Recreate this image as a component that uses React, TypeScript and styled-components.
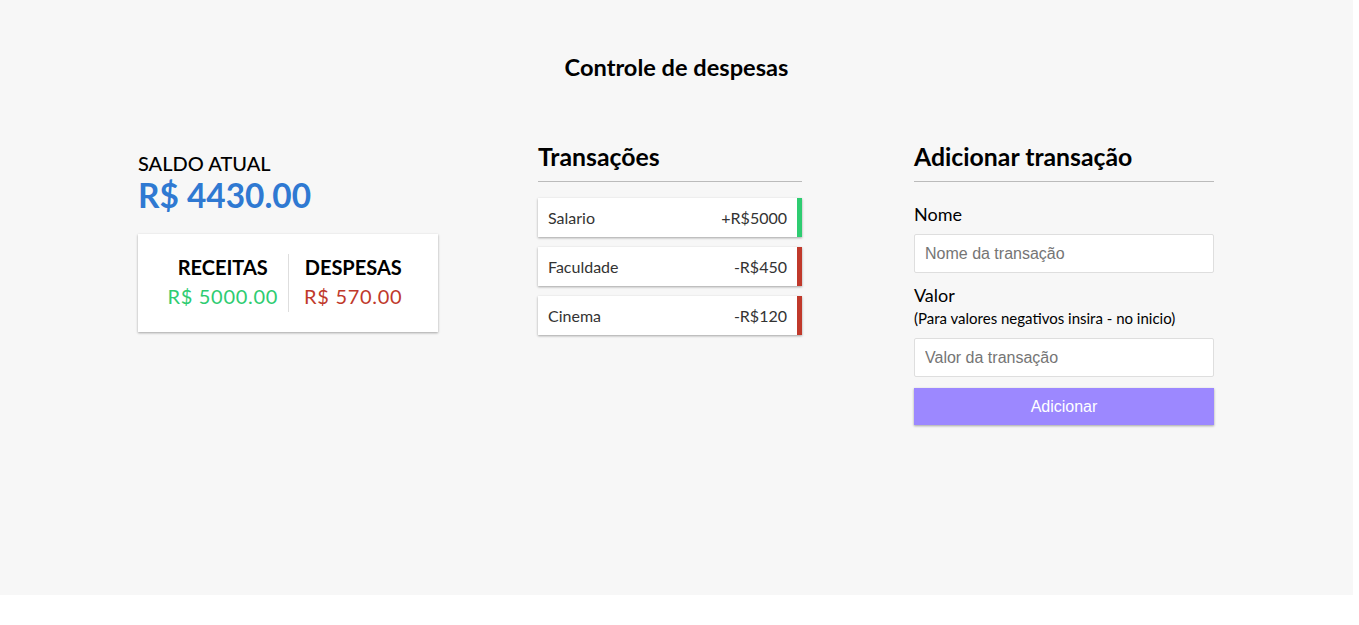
import React from "react";
import styled, { createGlobalStyle } from "styled-components";

const Global = createGlobalStyle`
  html, body { margin: 0; padding: 0; background: #ffffff; }
  * { box-sizing: border-box; }
`;

const Page = styled.div`
  width: 1353px;
  height: 595px;
  background: #f7f7f7;
  font-family: "Lato", "Open Sans", sans-serif;
  color: #000;
  padding-top: 51px;
`;

const Title = styled.h1`
  margin: 0;
  text-align: center;
  font-size: 23.6px;
  font-weight: 700;
  line-height: 32px;
`;

const Columns = styled.div`
  width: 1076px;
  margin: 57px 0 0 138px;
  display: flex;
  align-items: flex-start;
`;

const Column = styled.section<{ $w: number; $ml?: number }>`
  width: ${(p) => p.$w}px;
  margin-left: ${(p) => p.$ml ?? 0}px;
  display: flex;
  flex-direction: column;
`;

const SaldoLabel = styled.h4`
  margin: 11px 0 0;
  font-size: 20px;
  font-weight: 500;
  line-height: 24px;
  text-transform: uppercase;
`;

const Balance = styled.h2`
  margin: 0;
  font-size: 33.4px;
  font-weight: 700;
  line-height: 40px;
  color: #2f79d2;
`;

const SummaryCard = styled.div`
  background: #fff;
  box-shadow: 0 1px 3px rgba(0, 0, 0, 0.12), 0 1px 2px rgba(0, 0, 0, 0.24);
  padding: 20px;
  margin-top: 19px;
  display: flex;
`;

const SummaryCell = styled.div<{ $divider?: boolean }>`
  flex: 1;
  text-align: center;
  border-right: ${(p) => (p.$divider ? "1px solid #dedede" : "none")};
`;

const SummaryHead = styled.h4`
  margin: 0;
  font-size: 20px;
  font-weight: 700;
  line-height: 26px;
  text-transform: uppercase;
`;

const Money = styled.p<{ $color: string }>`
  margin: 4px 0 4px;
  font-size: 20px;
  letter-spacing: 0.7px;
  line-height: 24px;
  color: ${(p) => p.$color};
`;

const SectionTitle = styled.h3`
  margin: 0 0 16px;
  padding-bottom: 8px;
  border-bottom: 1px solid #bbb;
  font-size: 24.8px;
  font-weight: 700;
  line-height: 33px;
`;

const List = styled.ul`
  list-style: none;
  margin: 0;
  padding: 0;
  display: flex;
  flex-direction: column;
  gap: 10px;
`;

const Item = styled.li<{ $color: string }>`
  background: #fff;
  box-shadow: 0 1px 3px rgba(0, 0, 0, 0.12), 0 1px 2px rgba(0, 0, 0, 0.24);
  color: #333;
  display: flex;
  justify-content: space-between;
  align-items: center;
  height: 39px;
  padding: 0 10px;
  font-size: 16px;
  border-right: 5px solid ${(p) => p.$color};
`;

const Label = styled.label<{ $mt: number }>`
  display: block;
  margin: ${(p) => p.$mt}px 0 10px;
  font-size: 18px;
  font-weight: 400;
  line-height: 20px;
`;

const Hint = styled.span`
  display: block;
  margin-top: 3px;
  font-size: 15px;
  line-height: 20px;
`;

const Input = styled.input`
  display: block;
  width: 100%;
  height: 39px;
  border: 1px solid #dedede;
  border-radius: 2px;
  padding: 10px;
  font-size: 16px;
  font-family: "Liberation Sans", Arial, sans-serif;
  background: #fff;
  &::placeholder { color: #757575; }
`;

const Button = styled.button`
  display: block;
  width: 100%;
  height: 37px;
  margin-top: 11px;
  border: 0;
  background: #9c88ff;
  color: #fff;
  font-size: 16px;
  font-family: "Liberation Sans", Arial, sans-serif;
  box-shadow: 0 1px 3px rgba(0, 0, 0, 0.12), 0 1px 2px rgba(0, 0, 0, 0.24);
  cursor: pointer;
`;

const transactions = [
  { name: "Salario", value: "+R$5000", color: "#2ecc71" },
  { name: "Faculdade", value: "-R$450", color: "#c0392b" },
  { name: "Cinema", value: "-R$120", color: "#c0392b" },
];

export default function App() {
  return (
    <Page>
      <Global />
      <Title>Controle de despesas</Title>
      <Columns>
        <Column $w={300}>
          <SaldoLabel>Saldo atual</SaldoLabel>
          <Balance>R$ 4430.00</Balance>
          <SummaryCard>
            <SummaryCell $divider>
              <SummaryHead>Receitas</SummaryHead>
              <Money $color="#2ecc71">R$ 5000.00</Money>
            </SummaryCell>
            <SummaryCell>
              <SummaryHead>Despesas</SummaryHead>
              <Money $color="#c0392b">R$ 570.00</Money>
            </SummaryCell>
          </SummaryCard>
        </Column>
        <Column $w={264} $ml={100}>
          <SectionTitle>Transações</SectionTitle>
          <List>
            {transactions.map((t) => (
              <Item key={t.name} $color={t.color}>
                <span>{t.name}</span>
                <span>{t.value}</span>
              </Item>
            ))}
          </List>
        </Column>
        <Column $w={300} $ml={112}>
          <SectionTitle>Adicionar transação</SectionTitle>
          <Label $mt={6}>Nome</Label>
          <Input type="text" placeholder="Nome da transação" />
          <Label $mt={12}>
            Valor
            <Hint>(Para valores negativos insira - no inicio)</Hint>
          </Label>
          <Input type="number" placeholder="Valor da transação" />
          <Button>Adicionar</Button>
        </Column>
      </Columns>
    </Page>
  );
}
